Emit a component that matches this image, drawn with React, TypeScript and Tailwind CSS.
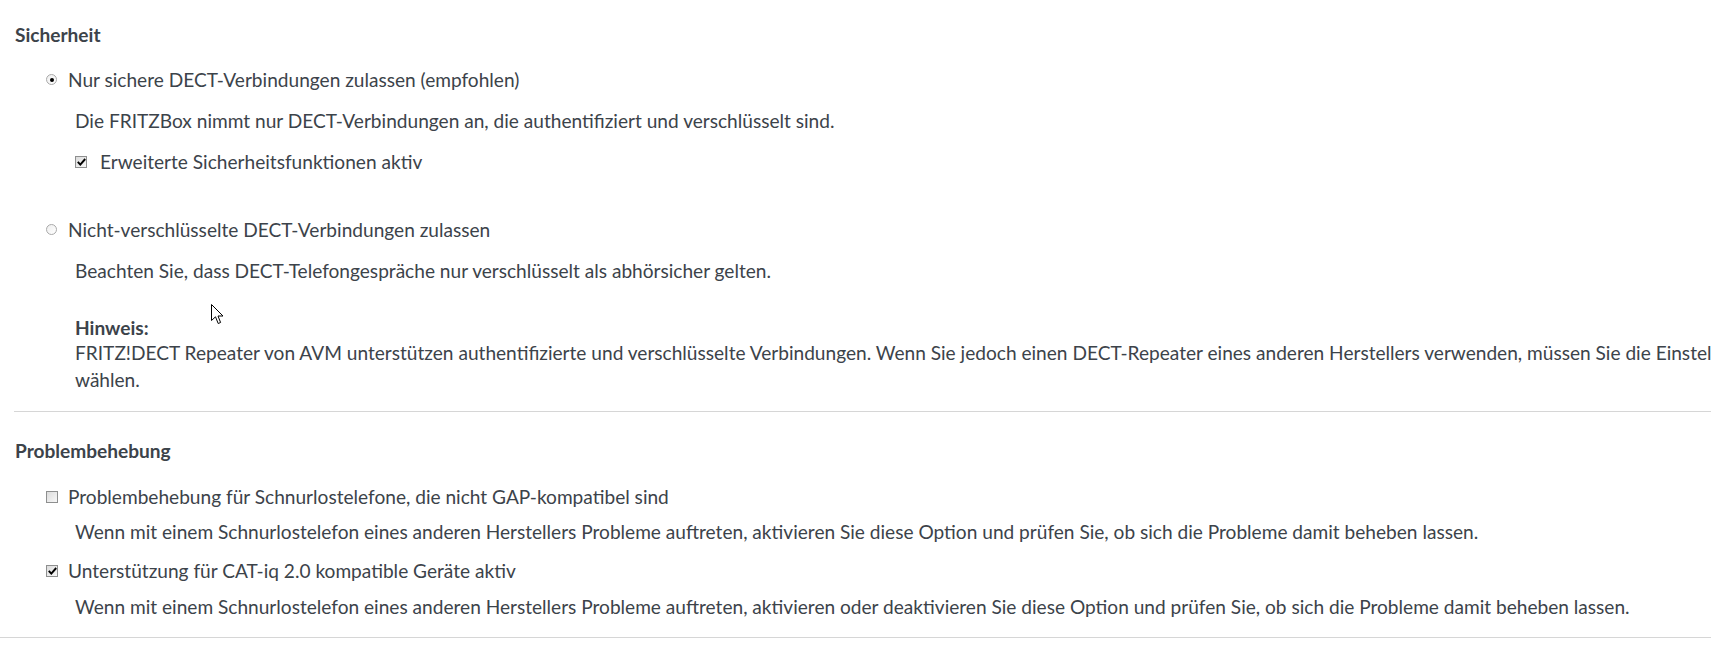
import React from 'react';

const Radio = ({ checked }: { checked?: boolean }) => (
  <span className="inline-flex w-[11px] h-[11px] shrink-0 items-center justify-center rounded-full border border-[#a9a9a9] bg-gradient-to-br from-[#eeeeee] to-white">
    {checked && <span className="w-[4px] h-[4px] rounded-full bg-black" />}
  </span>
);

const Check = ({ checked }: { checked?: boolean }) => (
  <span className="inline-flex w-[12px] h-[12px] shrink-0 items-center justify-center border border-[#8e8f8f] bg-gradient-to-br from-[#dcdcdc] to-[#f7f7f7]">
    {checked && (
      <svg width="9" height="8" viewBox="0 0 9 8">
        <path d="M0.8 3.8 L3.3 6.6 L8.2 1" fill="none" stroke="black" strokeWidth="1.9" />
      </svg>
    )}
  </span>
);

const Cursor = () => (
  <svg
    className="absolute left-[211px] top-[304px]"
    width="13"
    height="21"
    viewBox="0 0 13 21"
  >
    <path
      d="M0.5 0.5 L0.5 16.5 L4.5 12.8 L7.2 19.5 L9.6 18.5 L7 12 L12 12 Z"
      fill="white"
      stroke="black"
      strokeWidth="1"
    />
  </svg>
);

export default function App() {
  return (
    <div className="relative w-full h-[662px] overflow-hidden bg-white text-[#3c434a] font-['Lato',sans-serif] text-[19.1px] leading-[25px]">
      {/* Sicherheit */}
      <div className="pt-[22px] pl-[15px] font-bold">Sicherheit</div>

      <div className="mt-5 pl-[46px] flex items-center gap-[11px]">
        <Radio checked />
        <span>Nur sichere DECT-Verbindungen zulassen (empfohlen)</span>
      </div>
      <div className="mt-4 pl-[75px]">
        Die FRITZBox nimmt nur DECT-Verbindungen an, die authentifiziert und verschlüsselt sind.
      </div>
      <div className="mt-4 pl-[75px] flex items-center gap-[13px]">
        <Check checked />
        <span>Erweiterte Sicherheitsfunktionen aktiv</span>
      </div>

      <div className="mt-[43px] pl-[46px] flex items-center gap-[11px]">
        <Radio />
        <span>Nicht-verschlüsselte DECT-Verbindungen zulassen</span>
      </div>
      <div className="mt-4 pl-[75px]">
        Beachten Sie, dass DECT-Telefongespräche nur verschlüsselt als abhörsicher gelten.
      </div>
      <div className="mt-8 pl-[75px] w-[1900px]">
        <div className="font-bold">Hinweis:</div>
        <div className="whitespace-nowrap">
          FRITZ!DECT Repeater von AVM unterstützen authentifizierte und verschlüsselte Verbindungen. Wenn Sie jedoch einen DECT-Repeater eines anderen Herstellers verwenden, müssen Sie die Einstellung „Nicht-verschlüsselte DECT-Verbindungen zulassen“
        </div>
        <div className="mt-[2px]">wählen.</div>
      </div>

      <div className="mt-[19px] ml-[14px] border-t border-[#d6d6d6]" />

      {/* Problembehebung */}
      <div className="mt-[26px] pl-[15px] font-bold">Problembehebung</div>

      <div className="mt-[21px] pl-[46px] flex items-center gap-[10px]">
        <Check />
        <span>Problembehebung für Schnurlostelefone, die nicht GAP-kompatibel sind</span>
      </div>
      <div className="mt-[10px] pl-[75px]">
        Wenn mit einem Schnurlostelefon eines anderen Herstellers Probleme auftreten, aktivieren Sie diese Option und prüfen Sie, ob sich die Probleme damit beheben lassen.
      </div>
      <div className="mt-[14px] pl-[46px] flex items-center gap-[10px]">
        <Check checked />
        <span>Unterstützung für CAT-iq 2.0 kompatible Geräte aktiv</span>
      </div>
      <div className="mt-[11px] pl-[75px]">
        Wenn mit einem Schnurlostelefon eines anderen Herstellers Probleme auftreten, aktivieren oder deaktivieren Sie diese Option und prüfen Sie, ob sich die Probleme damit beheben lassen.
      </div>

      <div className="mt-[18px] border-t border-[#d6d6d6]" />

      <Cursor />
    </div>
  );
}
